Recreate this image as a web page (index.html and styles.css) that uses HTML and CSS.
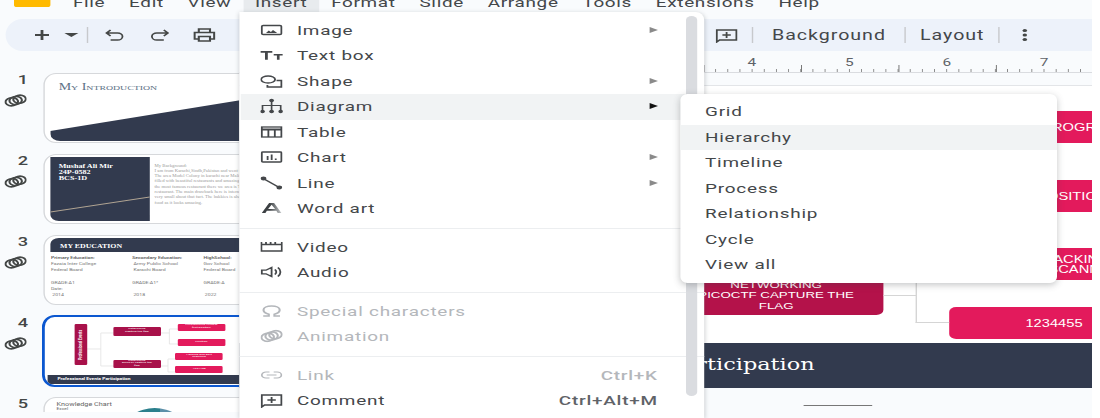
FILE: index.html
```html
<html>

<head>
    <title>Slides - Insert menu</title>
    <link rel="stylesheet" href="styles.css">
</head>

<body>

    <svg class="defs" width="0" height="0">
        <symbol id="rings" viewBox="0 0 16 13">
            <g fill="none" stroke="currentColor" stroke-width="1.500">
                <ellipse cx="5.200" cy="7.800" rx="4.500" ry="4" transform="rotate(-20 5.200 7.800)" />
                <ellipse cx="8" cy="6.500" rx="4.500" ry="4" transform="rotate(-20 8 6.500)" />
                <ellipse cx="10.800" cy="5.200" rx="4.500" ry="4" transform="rotate(-20 10.800 5.200)" />
            </g>
        </symbol>
        <symbol id="comment" viewBox="0 0 16 16">
            <path d="M1 3h14v10H3l-2 2z" fill="none" stroke="currentColor" stroke-width="1.300" />
            <path d="M8 5v6M5 8h6" stroke="currentColor" stroke-width="1.300" />
        </symbol>
    </svg>

    <div class="app">
        <div class="menubar">
            <div class="logo"></div>
            <div class="menubar-item">File</div>
            <div class="menubar-item">Edit</div>
            <div class="menubar-item">View</div>
            <div class="menubar-item active">Insert</div>
            <div class="menubar-item">Format</div>
            <div class="menubar-item">Slide</div>
            <div class="menubar-item">Arrange</div>
            <div class="menubar-item">Tools</div>
            <div class="menubar-item">Extensions</div>
            <div class="menubar-item">Help</div>
        </div>

        <div class="toolbar">
            <svg class="tool plus" viewBox="0 0 16 16"><path d="M8 3v10M3 8h10" stroke="currentColor" stroke-width="2" /></svg>
            <div class="caret"></div>
            <div class="tool-sep first"></div>
            <svg class="tool" viewBox="0 0 16 16"><path d="M5 3 2 6l3 3M2 6h8a3.200 3.200 0 0 1 0 7H5" fill="none" stroke="currentColor" stroke-width="1.300" /></svg>
            <svg class="tool" viewBox="0 0 16 16"><path d="m11 3 3 3-3 3M14 6H6a3.200 3.200 0 0 0 0 7h5" fill="none" stroke="currentColor" stroke-width="1.300" /></svg>
            <svg class="tool" viewBox="0 0 16 16"><path d="M4 5V2h8v3M4 12H1V5.500h14V12h-3M4 9.500h8V14H4z" fill="none" stroke="currentColor" stroke-width="1.500" /></svg>
            <div class="toolbar-right">
                <svg class="tool"><use href="#comment" /></svg>
                <div class="tool-sep"></div>
                <div class="tool-text">Background</div>
                <div class="tool-sep"></div>
                <div class="tool-text">Layout</div>
                <div class="tool-sep last"></div>
                <svg class="dots" viewBox="0 0 8 16"><circle cx="4" cy="3.500" r="1.600" /><circle cx="4" cy="8" r="1.600" /><circle cx="4" cy="12.500" r="1.600" /></svg>
            </div>
        </div>

        <div class="workspace">
            <div class="filmstrip">
                <div class="film-row">
                    <div class="film-side">
                        <div class="film-num">1</div>
                        <svg class="film-rings"><use href="#rings" /></svg>
                    </div>
                    <div class="thumb">
                        <div class="t1-title">My Introduction</div>
                        <div class="t1-wedge"></div>
                    </div>
                </div>

                <div class="film-row">
                    <div class="film-side">
                        <div class="film-num">2</div>
                        <svg class="film-rings"><use href="#rings" /></svg>
                    </div>
                    <div class="thumb t2">
                        <div class="t2-panel">
                            Mushaf Ali Mir<br>24P-0582<br>BCS-1D
                            <svg class="t2-line" viewBox="0 0 71 64" preserveAspectRatio="none"><path d="M0 55 71 40" stroke="#c9b9a0" stroke-width=".7" /></svg>
                        </div>
                        <div class="t2-text">
                            My Background:<br>
                            I am from Karachi,Sindh,Pakistan and went to school
                            The area Model Colony in karachi near Malir
                            Area is filled with beautiful restaurants and
                            amazing gardens, the most famous restaurant
                            there we area is Two Wives restaurant. The main
                            drawback here is internal he is very small about
                            that fact. The bakkies is also in his food as it
                            looks amazing.
                        </div>
                    </div>
                </div>

                <div class="film-row">
                    <div class="film-side">
                        <div class="film-num">3</div>
                        <svg class="film-rings"><use href="#rings" /></svg>
                    </div>
                    <div class="thumb t3">
                        <div class="t3-head">MY EDUCATION</div>
                        <div class="t3-cols">
                            <div><b>Primary Education:</b><br>Fazaia Inter College<br>Federal Board<br><br>GRADE:A1<br>Date:<br>&nbsp;2014</div>
                            <div><b>Secondary Education:</b><br>&nbsp;Army Public School<br>&nbsp;Karachi Board<br><br>GRADE:A1*<br><br>&nbsp;2018</div>
                            <div><b>HighSchool:</b><br>Gov School<br>Federal Board<br><br>GRADE:A<br><br>&nbsp;2022</div>
                        </div>
                    </div>
                </div>

                <div class="film-row">
                    <div class="film-side">
                        <div class="film-num">4</div>
                        <svg class="film-rings"><use href="#rings" /></svg>
                    </div>
                    <div class="thumb selected">
                        <svg class="t4-lines" viewBox="0 0 155 70" preserveAspectRatio="none">
                            <path d="M30 30h10M40 14v33M40 14h10M40 47h10M83 14h6M89 10v15M89 10h6M89 25h6M83 47h5M88 40v13M88 40h5M88 53h5" fill="none" stroke="#e3e3e3" stroke-width=".7" />
                        </svg>
                        <div class="t4-node dark main">Professional Events</div>
                        <div class="t4-node dark a">Networking<br>Capture the flag</div>
                        <div class="t4-node dark b">Networking<br>picoCTF capture the<br>flag</div>
                        <div class="t4-node c">Programming contest<br>first position</div>
                        <div class="t4-node d">Position</div>
                        <div class="t4-node e">Hacking and port<br>scanning</div>
                        <div class="t4-node f">1234455</div>
                        <div class="t4-band">Professional Events Participation</div>
                    </div>
                </div>

                <div class="film-row">
                    <div class="film-side">
                        <div class="film-num">5</div>
                    </div>
                    <div class="thumb t5">
                        <div class="t5-title">Knowledge Chart</div>
                        <div class="t5-sub">Excel</div>
                        <div class="t5-pie"></div>
                    </div>
                </div>
            </div>

            <div class="editor">
                <div class="ruler">
                    <div class="ruler-nums">
                        <span>4</span><span>5</span><span>6</span><span>7</span>
                    </div>
                    <div class="ruler-ticks"></div>
                </div>

                <div class="slide">
                    <div class="node rose p1">C PROGRAMMING</div>
                    <div class="node rose p2">1ST POSITION</div>
                    <div class="node rose p3">ETHICAL HACKING<br>VIA PORT SCANNING</div>
                    <div class="node rose p4">1234455</div>
                    <div class="node wine">NETWORKING<br>PICOCTF CAPTURE THE<br>FLAG</div>
                    <div class="wire w1"></div>
                    <div class="wire w2"></div>
                    <div class="wire w3"></div>
                    <div class="slide-band">Professional Events Participation</div>
                </div>

                <div class="pager"></div>
            </div>
        </div>

        <div class="menu">
            <div class="menu-scroll"></div>
            <div class="menu-item">
                <svg class="icon" viewBox="0 0 16 16"><rect x="1" y="3.500" width="14" height="9" rx="1" fill="none" stroke="currentColor" stroke-width="1.300" /><path d="m4 11 2-2.500L7.500 10l1.500-2 3 3z" /></svg>
                Image<i class="arrow"></i>
            </div>
            <div class="menu-item">
                <svg class="icon" viewBox="0 0 16 16"><path d="M0 4h8.500v1.800H5.300v7H3.300v-7H0zM9.500 7H16v1.600h-2.300v4.200h-1.900V8.600H9.500z" /></svg>
                Text box
            </div>
            <div class="menu-item">
                <svg class="icon" viewBox="0 0 16 16"><ellipse cx="5.500" cy="6.500" rx="5" ry="3.500" fill="none" stroke="currentColor" stroke-width="1.300" /><path d="M11.500 7.500H15V14H5v-2" fill="none" stroke="currentColor" stroke-width="1.300" /></svg>
                Shape<i class="arrow"></i>
            </div>
            <div class="menu-item hover">
                <svg class="icon" viewBox="0 0 16 16"><circle cx="8" cy="2.500" r="1.700" /><circle cx="1.500" cy="13.500" r="1.700" /><circle cx="8" cy="13.500" r="1.700" /><circle cx="14.500" cy="13.500" r="1.700" /><path d="M8 3v10M1.500 13V7.500h13V13" fill="none" stroke="currentColor" stroke-width="1.200" /></svg>
                Diagram<i class="arrow on"></i>
            </div>
            <div class="menu-item">
                <svg class="icon" viewBox="0 0 16 16"><rect x="1" y="3" width="14" height="10" fill="none" stroke="currentColor" stroke-width="1.300" /><path d="M1 5.500h14" fill="none" stroke="currentColor" stroke-width="2" /><path d="M5.700 5.500V13M10.300 5.500V13" fill="none" stroke="currentColor" stroke-width="1.300" /></svg>
                Table
            </div>
            <div class="menu-item">
                <svg class="icon" viewBox="0 0 16 16"><rect x="1" y="3" width="14" height="10" rx=".8" fill="none" stroke="currentColor" stroke-width="1.300" /><path d="M4.500 7h1.300v4H4.500zM7.400 5.500h1.300V11H7.400zM10.300 9.500h1.300V11h-1.300z" /></svg>
                Chart<i class="arrow"></i>
            </div>
            <div class="menu-item">
                <svg class="icon" viewBox="0 0 16 16"><path d="m2 3.500 11.500 9" stroke="currentColor" stroke-width="1.300" /><ellipse cx="2.200" cy="3.500" rx="2" ry="1.900" /><ellipse cx="13.500" cy="12.500" rx="2" ry="1.900" /></svg>
                Line<i class="arrow"></i>
            </div>
            <div class="menu-item">
                <svg class="icon" viewBox="0 0 16 16"><defs><linearGradient id="wa"><stop offset=".4" stop-color="#3c4043" /><stop offset="1" stop-color="#c4c7c9" /></linearGradient></defs><path d="M6.200 3h3.600L15 13h-2.600l-1-2.200H4.600L3.600 13H1zM5.500 9h5L8 4.700z" fill="url(#wa)" fill-rule="evenodd" /></svg>
                Word art
            </div>
            <div class="menu-sep"></div>
            <div class="menu-item">
                <svg class="icon" viewBox="0 0 16 16"><path d="M.700 5.500h14.600V12H.700zM.700 3v2.500M4 3v2.500M7.300 3v2.500M10.600 3v2.500M15.300 3v2.500" fill="none" stroke="currentColor" stroke-width="1.300" /></svg>
                Video
            </div>
            <div class="menu-item">
                <svg class="icon" viewBox="0 0 16 16"><path d="M1 6.200h3L8 3.500v9L4 9.800H1z" fill="none" stroke="currentColor" stroke-width="1.300" /><path d="M10.300 5.500a3.500 3.500 0 0 1 0 5M12.500 3.500a6.500 6.500 0 0 1 0 9" fill="none" stroke="currentColor" stroke-width="1.300" /></svg>
                Audio
            </div>
            <div class="menu-sep"></div>
            <div class="menu-item off">
                <svg class="icon" viewBox="0 0 16 16"><path d="M2 13h4v-1.800C3.500 10.300 2.200 8.800 2.200 7 2.200 4.600 4.700 3 8 3s5.800 1.600 5.800 4c0 1.800-1.300 3.300-3.800 4.200V13h4" fill="none" stroke="currentColor" stroke-width="1.500" /></svg>
                Special characters
            </div>
            <div class="menu-item off">
                <svg class="icon" viewBox="0 0 16 13"><use href="#rings" /></svg>
                Animation
            </div>
            <div class="menu-sep"></div>
            <div class="menu-item off">
                <svg class="icon" viewBox="0 0 16 16"><path d="M6.500 5H4a3 3 0 0 0 0 6h2.500M9.500 5H12a3 3 0 0 1 0 6H9.500M4.500 8h7" fill="none" stroke="currentColor" stroke-width="1.200" /></svg>
                Link<span class="keys">Ctrl+K</span>
            </div>
            <div class="menu-item">
                <svg class="icon"><use href="#comment" /></svg>
                Comment<span class="keys">Ctrl+Alt+M</span>
            </div>
        </div>

        <div class="submenu">
            <div class="submenu-item">Grid</div>
            <div class="submenu-item hover">Hierarchy</div>
            <div class="submenu-item">Timeline</div>
            <div class="submenu-item">Process</div>
            <div class="submenu-item">Relationship</div>
            <div class="submenu-item">Cycle</div>
            <div class="submenu-item">View all</div>
        </div>
    </div>

</body>

</html>
```

FILE: styles.css
```css
/* the whole reference is stretched sideways, so lengths below are reference x / 1.4 */
body {
    margin: 0;
    background: #fff;
    font-family: Roboto, sans-serif;
    color: #44474a;
    overflow: hidden;
}

.defs {
    position: absolute;
}

.app {
    position: relative;
    width: 780px;
    height: 418px;
    overflow: hidden;
    background: #f9fbfd;
    transform: scaleX(1.4);
    transform-origin: 0 0;
}

.menubar {
    display: flex;
    height: 12px;
    padding-left: 10px;
    font-size: 13.500px;
    letter-spacing: .48px;
    line-height: 5px;
    margin-bottom: 7px;
}

.logo {
    width: 25.700px;
    height: 7px;
    margin-right: 7.900px;
    background: #ffba00;
    border-radius: 0 0 2px 2px;
}

.menubar-item {
    padding: 0 8.500px;
}

.menubar-item.active {
    background: #e8ebee;
}

.toolbar {
    display: flex;
    align-items: center;
    height: 32px;
    margin-left: 4.300px;
    padding-left: 17.700px;
    padding-right: 44px;
    background: #edf2fa;
    border-radius: 12px 0 0 12px / 16px 0 0 16px;
}

.tool {
    width: 16px;
    height: 16px;
    margin-right: 16px;
    color: #444746;
}

.tool.plus {
    margin-right: 8.400px;
}

.caret {
    width: 0;
    height: 0;
    border: 5px solid transparent;
    border-top: 4px solid #444746;
    border-bottom: 0;
    margin-right: 5.700px;
}

.tool-sep {
    width: .8px;
    height: 16px;
    background: #c7c9cc;
    margin: 0 10px 0 13.500px;
}

.tool-sep.first {
    margin: 0 11.200px 0 0;
}

.tool-sep.last {
    margin-left: 10px;
    margin-right: 14px;
}

.toolbar-right {
    display: flex;
    align-items: center;
    margin-left: auto;
}

.toolbar-right .tool {
    margin-right: 0;
}

.toolbar-right .tool + .tool-sep {
    margin-left: 10.300px;
    margin-right: 13.500px;
}

.tool-text {
    font-size: 14px;
    letter-spacing: .7px;
}

.dots {
    width: 8px;
    height: 16px;
    fill: #444746;
}

.workspace {
    display: flex;
}

.filmstrip {
    width: 171.400px;
    height: 361px;
    padding-top: 22px;
    box-sizing: border-box;
    overflow: hidden;
    flex: none;
}

.film-row {
    display: flex;
    height: 70px;
    margin-bottom: 11px;
}

.film-side {
    width: 31.400px;
    flex: none;
}

.film-num {
    font-size: 13px;
    font-weight: 500;
    line-height: 14px;
    text-align: right;
    padding-right: 11.400px;
    color: #444746;
}

.film-rings {
    display: block;
    width: 16.400px;
    height: 13px;
    margin: 7px 0 0 2.900px;
    color: #444746;
}

.thumb {
    position: relative;
    flex: none;
    width: 155px;
    height: 70px;
    box-sizing: border-box;
    background: #fff;
    border: 1px solid #d6d8db;
    border-radius: 9px / 12px;
    overflow: hidden;
}

.thumb.selected {
    border: 2.500px solid #0b57d0;
    border-left-width: 2px;
    height: 72px;
    margin: -1px 0 0 -1.400px;
}

.t1-title {
    margin: 7px 0 0 9.500px;
    font-family: "Liberation Serif", serif;
    font-variant: small-caps;
    font-size: 10px;
    color: #5c7186;
}

.t1-wedge {
    position: absolute;
    left: 3.500px;
    right: 0;
    bottom: 1px;
    height: 44px;
    background: #323a4e;
    clip-path: polygon(0 77%, 100% 0, 100% 100%, 0 100%);
    border-radius: 0 0 0 7px;
}

.t2 {
    display: flex;
    padding: 1.500px 0 1.500px 3.500px;
}

.t2-panel {
    position: relative;
    width: 71px;
    height: 64px;
    flex: none;
    box-sizing: border-box;
    padding: 6px 0 0 6px;
    background: #323a4e;
    color: #fff;
    font-family: "Liberation Serif", serif;
    font-weight: bold;
    font-size: 5.800px;
    line-height: 6px;
    border-radius: 0 0 0 6px;
}

.t2-line {
    position: absolute;
    left: 0;
    top: 0;
    width: 71px;
    height: 64px;
}

.t2-text {
    margin-left: 3.500px;
    padding-top: 7px;
    width: 80px;
    font-family: "Liberation Serif", serif;
    font-size: 3.400px;
    line-height: 5.300px;
    color: #9a9a9a;
}

.t3-head {
    height: 14px;
    margin: 1.500px 0 0 3.500px;
    padding-left: 7px;
    background: #323a4e;
    color: #fff;
    font-family: "Liberation Serif", serif;
    font-weight: bold;
    font-size: 5.600px;
    line-height: 16px;
    border-radius: 6px 0 0 0;
}

.t3-cols {
    display: flex;
    padding: 3px 0 0 4px;
    font-size: 3.700px;
    line-height: 6.300px;
    color: #777;
}

.t3-cols div {
    width: 58px;
    flex: none;
    white-space: nowrap;
}

.t3-cols div:last-child {
    width: 40px;
    margin-left: -7px;
}

.t3-cols b {
    color: #555;
    font-weight: 500;
}

.t4-lines {
    position: absolute;
    left: 0;
    top: 1.500px;
    width: 155px;
    height: 70px;
}

.t4-node {
    position: absolute;
    display: flex;
    align-items: center;
    justify-content: center;
    text-align: center;
    left: 95px;
    width: 33.600px;
    background: #e31a5c;
    color: #fff;
    font-size: 2.400px;
    line-height: 2.600px;
    border-radius: 1px;
}

.t4-node.dark {
    background: #a8114a;
}

.t4-node.main {
    left: 20.900px;
    top: 6.500px;
    width: 9.300px;
    height: 41px;
    writing-mode: vertical-rl;
    transform: rotate(180deg);
    font-size: 3.400px;
    font-weight: bold;
}

.t4-node.a {
    left: 49px;
    top: 9.500px;
    height: 9px;
}

.t4-node.b {
    left: 49px;
    top: 42.500px;
    height: 8.500px;
}

.t4-node.c {
    top: 6.500px;
    height: 7px;
}

.t4-node.d {
    top: 21.500px;
    height: 7px;
}

.t4-node.e {
    left: 93.400px;
    top: 36px;
    height: 6.500px;
}

.t4-node.f {
    left: 93.400px;
    top: 48.500px;
    height: 7px;
}

.t4-band {
    position: absolute;
    left: 2px;
    right: 0;
    bottom: 1.500px;
    height: 9px;
    padding-left: 7px;
    background: #323a4e;
    color: #fff;
    font-size: 3.500px;
    font-weight: bold;
    line-height: 9px;
}

.t5-title {
    margin: 3px 0 0 8px;
    font-size: 5.200px;
    color: #666;
}

.t5-sub {
    margin-left: 8px;
    font-size: 3.500px;
    color: #666;
}

.t5-pie {
    position: absolute;
    left: 57px;
    top: 10px;
    width: 43px;
    height: 43px;
    border-radius: 50%;
    background: linear-gradient(90deg, #2a7f8c 58%, #5b8fa8 58%);
}

.editor {
    flex: 1;
    min-width: 0;
}

.ruler {
    height: 35px;
    box-sizing: border-box;
    border-bottom: 1px solid #e3e5e8;
}

.ruler-nums {
    display: flex;
    height: 14px;
    padding-left: 330.900px;
    font-size: 11px;
    line-height: 24px;
    color: #5f6368;
}

.ruler-nums span {
    width: 69.600px;
    flex: none;
    text-align: center;
}

.ruler-ticks {
    height: 7px;
    border-bottom: 1px solid #dadce0;
    background:
        linear-gradient(90deg, #777 .7px, transparent .7px) 53.200px 100% / 69.600px 7px repeat-x,
        linear-gradient(90deg, #888 .7px, transparent .7px) 1px 100% / 8.700px 3px repeat-x;
}

.slide {
    position: relative;
    height: 302px;
    background: #fff;
    overflow: hidden;
}

.node {
    position: absolute;
    color: #fff;
    font-family: "Liberation Sans", sans-serif;
    font-size: 10.500px;
    line-height: 10.300px;
    white-space: nowrap;
}

.rose {
    left: 506.500px;
    width: 150px;
    background: #e31a5c;
    border-radius: 5px;
    display: flex;
    align-items: center;
    height: 32px;
}

.p1 {
    top: 25px;
    padding-left: 56px;
}

.p2 {
    top: 94px;
    padding-left: 41px;
}

.p3 {
    top: 162px;
    padding-left: 20px;
}

.p4 {
    top: 221px;
    justify-content: center;
}

.wine {
    left: 306px;
    top: 190.500px;
    width: 154px;
    height: 38px;
    font-size: 9.500px;
    display: flex;
    align-items: center;
    justify-content: center;
    text-align: center;
    background: #b4124a;
    border-radius: 0 0 5px 0;
}

.wire {
    position: absolute;
    background: #d5d5d5;
}

.w1 {
    left: 459.300px;
    top: 209px;
    width: 24px;
    height: 1px;
}

.w2 {
    left: 482.900px;
    top: 197px;
    width: .8px;
    height: 40px;
}

.w3 {
    left: 482.900px;
    top: 236px;
    width: 24px;
    height: 1px;
}

.slide-band {
    position: absolute;
    left: 0;
    right: 0;
    top: 257px;
    height: 45px;
    padding-left: 141.500px;
    box-sizing: border-box;
    background: #323a4e;
    color: #fff;
    font-family: "DejaVu Serif", serif;
    font-size: 16px;
    line-height: 44px;
    white-space: nowrap;
}

.pager {
    width: 49.300px;
    height: 1px;
    margin: 17px 0 0 402.200px;
    background: #777;
}

.menu {
    position: absolute;
    left: 171.400px;
    top: 12px;
    width: 331.400px;
    height: 406px;
    box-sizing: border-box;
    padding-top: 5.500px;
    background: #fff;
    border-radius: 0 6px 0 0 / 0 8px 0 0;
    box-shadow: 0 1px 4px rgba(60, 64, 67, .25);
    font-size: 13.500px;
    letter-spacing: .55px;
}

.menu-scroll {
    position: absolute;
    left: 318.600px;
    top: 4px;
    width: 7.900px;
    height: 380px;
    background: #dadce0;
    border-radius: 4px;
}

.menu-item {
    display: flex;
    align-items: center;
    box-sizing: border-box;
    height: 25.500px;
    padding: 0 32.900px 1px 14.300px;
}

.menu-item.hover {
    background: #f1f3f4;
    margin-left: .7px;
    padding-left: 13.600px;
}

.menu-item.off {
    color: #b4b7bb;
}

.icon {
    width: 16px;
    height: 16px;
    margin-right: 10.400px;
    fill: currentColor;
    flex: none;
}

.arrow {
    width: 0;
    height: 0;
    margin-left: auto;
    margin-right: 0;
    border-left: 6.400px solid #8a8a8a;
    border-top: 3px solid transparent;
    border-bottom: 3px solid transparent;
}

.arrow.on {
    border-left-color: #111;
}

.keys {
    margin-left: auto;
    font-weight: 500;
    color: #5f6368;
}

.menu-item.off .keys {
    color: #b4b7bb;
}

.menu-sep {
    height: 1px;
    margin: 6px 0;
    background: #eceef0;
}

.submenu {
    position: absolute;
    left: 485.700px;
    top: 94px;
    width: 269.300px;
    height: 189px;
    box-sizing: border-box;
    padding-top: 5px;
    background: #fff;
    border-radius: 5px / 6px;
    box-shadow: 0 2px 6px rgba(60, 64, 67, .3);
    font-size: 13.500px;
    letter-spacing: .55px;
}

.submenu-item {
    height: 25.500px;
    line-height: 25.500px;
    padding-left: 17.900px;
}

.submenu-item.hover {
    background: #f1f3f4;
    margin-left: .7px;
    padding-left: 17.200px;
}
```
